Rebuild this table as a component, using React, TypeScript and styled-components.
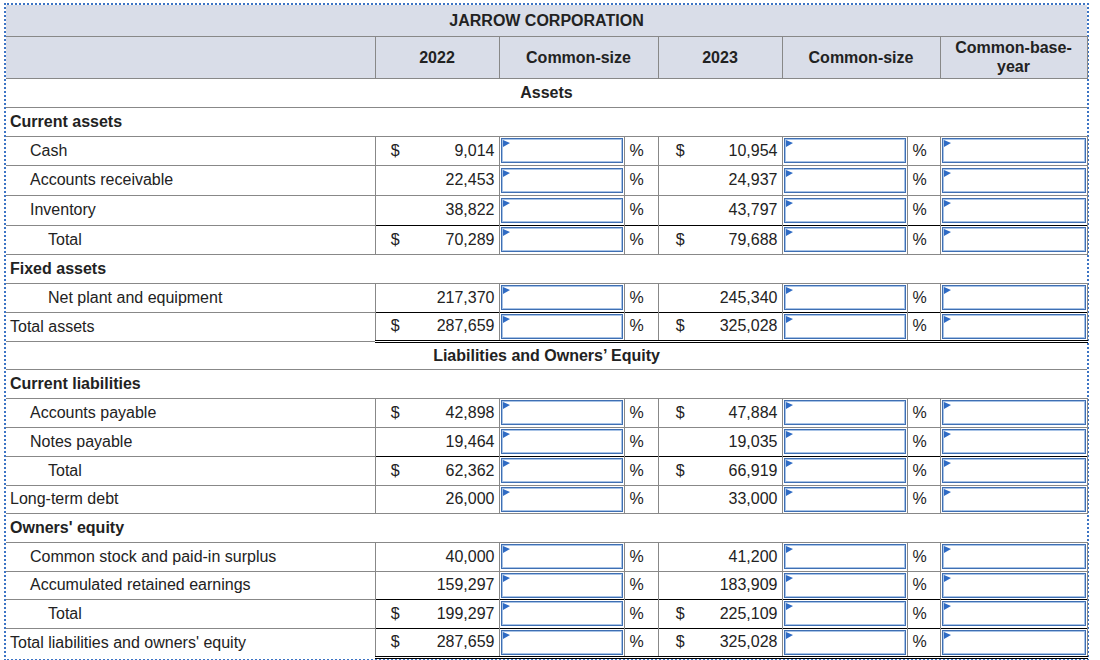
import React from "react";
import styled, { createGlobalStyle } from "styled-components";

const GlobalStyle = createGlobalStyle`
  body {
    margin: 0;
    background: #fff;
    color: #222;
    font-family: "Liberation Sans", Arial, sans-serif;
  }
`;

const Frame = styled.div`
  margin: 3px 0 0 4px;
  width: 1081px;
  border: 2px dotted #3d74c4;
`;

const Sheet = styled.table`
  width: 1081px;
  table-layout: fixed;
  border-collapse: collapse;
  font-size: 16px;
`;

const Row = styled.tr<{ $h: number }>`
  height: ${(p) => p.$h}px;
`;

const Title = styled.th`
  background: #d9dde8;
  font-weight: bold;
  text-align: center;
  padding: 2px 0 0;
`;

const Head = styled.th<{ $last?: boolean }>`
  background: #d9dde8;
  font-weight: bold;
  text-align: center;
  padding: 0 6px;
  line-height: 19px;
  border-top: 1px solid #888;
  border-left: 1px solid #888;
  ${(p) => p.$last && "border-right: 1px solid #888;"}
  &:first-child {
    border-left: none;
  }
`;

const Banner = styled.td`
  font-weight: bold;
  text-align: center;
  padding: 0;
  border-top: 1px solid #888;
`;

const Section = styled.td`
  font-weight: bold;
  padding: 0 0 0 4px;
  border-top: 1px solid #888;
`;

const Label = styled.td<{ $indent: number }>`
  padding: 0 0 0 ${(p) => [4, 24, 42][p.$indent]}px;
  border-top: 1px solid #888;
  border-right: 1px solid #888;
  white-space: nowrap;
`;

const Cell = styled.td<{ $total?: boolean; $double?: boolean }>`
  padding: 0;
  vertical-align: middle;
  border-top: 1px solid ${(p) => (p.$total ? "#000" : "#888")};
  ${(p) => p.$double && "border-bottom: 3px double #000;"}
`;

const Dollar = styled(Cell)`
  text-align: center;
`;

const Amount = styled(Cell)`
  text-align: right;
  padding-right: 4px;
`;

const Entry = styled(Cell)`
  padding: 1px;
  border-left: 1px solid #888;
  border-right: 1px solid #888;
`;

const Pct = styled(Cell)`
  padding-left: 5px;
  border-right: 1px solid #888;
`;

const Field = styled.span`
  position: relative;
  display: block;
  height: 25px;
  box-sizing: border-box;
  border: 1px solid #3f6fb3;
  box-shadow: inset 0 0 0 1px #a8c3e6;
  background: #fff;

  &::before {
    content: "";
    position: absolute;
    left: 1px;
    top: 1px;
    border-left: 7px solid #2f6bc4;
    border-top: 3px solid transparent;
    border-bottom: 4px solid transparent;
  }

  input {
    display: block;
    width: 100%;
    height: 100%;
    box-sizing: border-box;
    border: none;
    outline: none;
    background: transparent;
    font: inherit;
    padding: 0 6px;
  }
`;

type Line =
  | { kind: "banner"; text: string; h: number }
  | { kind: "section"; text: string; h: number }
  | {
      kind: "data";
      text: string;
      indent: number;
      dollar?: boolean;
      v1: string;
      v2: string;
      total?: boolean;
      double?: boolean;
      h: number;
    };

const lines: Line[] = [
  { kind: "banner", text: "Assets", h: 29 },
  { kind: "section", text: "Current assets", h: 29 },
  { kind: "data", text: "Cash", indent: 1, dollar: true, v1: "9,014", v2: "10,954", h: 29 },
  { kind: "data", text: "Accounts receivable", indent: 1, v1: "22,453", v2: "24,937", h: 30 },
  { kind: "data", text: "Inventory", indent: 1, v1: "38,822", v2: "43,797", h: 30 },
  { kind: "data", text: "Total", indent: 2, dollar: true, v1: "70,289", v2: "79,688", total: true, h: 29 },
  { kind: "section", text: "Fixed assets", h: 29 },
  { kind: "data", text: "Net plant and equipment", indent: 2, v1: "217,370", v2: "245,340", h: 29 },
  { kind: "data", text: "Total assets", indent: 0, dollar: true, v1: "287,659", v2: "325,028", total: true, double: true, h: 28 },
  { kind: "banner", text: "Liabilities and Owners\u2019 Equity", h: 28 },
  { kind: "section", text: "Current liabilities", h: 29 },
  { kind: "data", text: "Accounts payable", indent: 1, dollar: true, v1: "42,898", v2: "47,884", h: 29 },
  { kind: "data", text: "Notes payable", indent: 1, v1: "19,464", v2: "19,035", h: 29 },
  { kind: "data", text: "Total", indent: 2, dollar: true, v1: "62,362", v2: "66,919", total: true, h: 29 },
  { kind: "data", text: "Long-term debt", indent: 0, v1: "26,000", v2: "33,000", h: 28 },
  { kind: "section", text: "Owners' equity", h: 29 },
  { kind: "data", text: "Common stock and paid-in surplus", indent: 1, v1: "40,000", v2: "41,200", h: 29 },
  { kind: "data", text: "Accumulated retained earnings", indent: 1, v1: "159,297", v2: "183,909", h: 28 },
  { kind: "data", text: "Total", indent: 2, dollar: true, v1: "199,297", v2: "225,109", total: true, h: 29 },
  { kind: "data", text: "Total liabilities and owners' equity", indent: 0, dollar: true, v1: "287,659", v2: "325,028", total: true, double: true, h: 28 },
];

const widths = [369, 40, 84, 125, 34, 44, 80, 125, 33, 147];

function Input() {
  return (
    <Field>
      <input type="text" />
    </Field>
  );
}

function App() {
  return (
    <>
      <GlobalStyle />
      <Frame>
        <Sheet>
          <colgroup>
            {widths.map((w, i) => (
              <col key={i} style={{ width: w }} />
            ))}
          </colgroup>
          <thead>
            <Row $h={31}>
              <Title colSpan={10}>JARROW CORPORATION</Title>
            </Row>
            <Row $h={42}>
              <Head />
              <Head colSpan={2}>2022</Head>
              <Head colSpan={2}>Common-size</Head>
              <Head colSpan={2}>2023</Head>
              <Head colSpan={2}>Common-size</Head>
              <Head $last>Common-base-year</Head>
            </Row>
          </thead>
          <tbody>
            {lines.map((l, i) => {
              if (l.kind === "banner")
                return (
                  <Row $h={l.h} key={i}>
                    <Banner colSpan={10}>{l.text}</Banner>
                  </Row>
                );
              if (l.kind === "section")
                return (
                  <Row $h={l.h} key={i}>
                    <Section colSpan={10}>{l.text}</Section>
                  </Row>
                );
              const t = { $total: l.total, $double: l.double };
              return (
                <Row $h={l.h} key={i}>
                  <Label $indent={l.indent}>{l.text}</Label>
                  <Dollar {...t}>{l.dollar ? "$" : ""}</Dollar>
                  <Amount {...t}>{l.v1}</Amount>
                  <Entry {...t}>
                    <Input />
                  </Entry>
                  <Pct {...t}>%</Pct>
                  <Dollar {...t}>{l.dollar ? "$" : ""}</Dollar>
                  <Amount {...t}>{l.v2}</Amount>
                  <Entry {...t}>
                    <Input />
                  </Entry>
                  <Pct {...t}>%</Pct>
                  <Entry {...t}>
                    <Input />
                  </Entry>
                </Row>
              );
            })}
          </tbody>
        </Sheet>
      </Frame>
    </>
  );
}

export default App;
